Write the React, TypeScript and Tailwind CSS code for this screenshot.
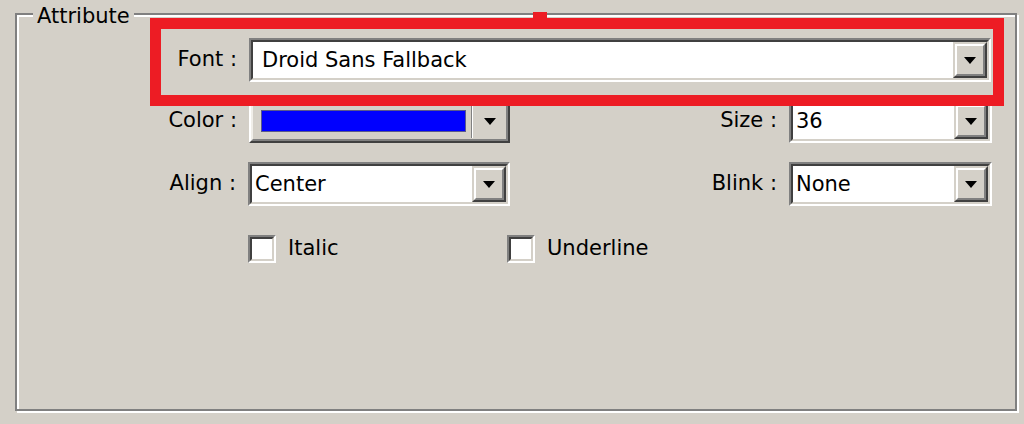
import { ReactNode } from "react";

const FONT = "font-['DejaVu_Sans',Tahoma,sans-serif]";

function DropButton() {
  return (
    <div className="h-full w-[34px] shrink-0 border-2 border-t-[#d4d0c8] border-l-[#d4d0c8] border-b-[#404040] border-r-[#404040]">
      <div className="flex h-full w-full items-center justify-center border-2 border-t-white border-l-white border-b-[#808080] border-r-[#808080] bg-[#d4d0c8]">
        <svg width="12" height="7" viewBox="0 0 12 7">
          <path d="M0 0h12L6 7z" fill="#000" />
        </svg>
      </div>
    </div>
  );
}

function Combo({ value, width, pad = "pl-[3px]" }: { value: string; width: string; pad?: string }) {
  return (
    <div className={`${width} h-[44px] shrink-0 border-2 border-t-[#808080] border-l-[#808080] border-b-white border-r-white`}>
      <div className="flex h-full w-full border-2 border-t-[#404040] border-l-[#404040] border-b-[#d4d0c8] border-r-[#d4d0c8] bg-white">
        <div className={`flex-1 truncate ${pad} text-[21px] leading-[36px] text-black`}>{value}</div>
        <DropButton />
      </div>
    </div>
  );
}

function ColorPicker() {
  return (
    <div className="h-[44px] w-[261px] shrink-0 border-2 border-t-white border-l-white border-b-[#404040] border-r-[#404040]">
      <div className="flex h-full w-full items-center border-2 border-t-[#f0eee9] border-l-[#f0eee9] border-b-[#808080] border-r-[#808080] bg-[#d4d0c8]">
        <div className="ml-[8px] h-[22px] w-[205px] border border-[#5a5a8a] bg-[#0000ff]" />
        <div className="ml-[5px] h-[34px] w-[2px] border-l border-l-[#808080] border-r border-r-white" />
        <div className="flex flex-1 justify-center">
          <svg width="12" height="7" viewBox="0 0 12 7">
            <path d="M0 0h12L6 7z" fill="#000" />
          </svg>
        </div>
      </div>
    </div>
  );
}

function Label({ children, width }: { children: ReactNode; width: string }) {
  return <div className={`${width} shrink-0 pr-[12px] text-right text-[21px] text-black`}>{children}</div>;
}

function Check({ label, width }: { label: string; width?: string }) {
  return (
    <div className={`flex items-center ${width ?? ""}`}>
      <div className="h-[28px] w-[28px] border-2 border-t-[#808080] border-l-[#808080] border-b-white border-r-white">
        <div className="h-full w-full border-2 border-t-[#404040] border-l-[#404040] border-b-[#d4d0c8] border-r-[#d4d0c8] bg-white" />
      </div>
      <span className="ml-[12px] text-[21px] text-black">{label}</span>
    </div>
  );
}

export default function App() {
  return (
    <div className={`relative h-[424px] w-[1024px] overflow-hidden bg-[#d4d0c8] pl-[15px] pt-[13px] ${FONT}`}>
      <div className="relative h-[398px] w-[1002px] border-2 border-[#808080] shadow-[inset_2px_2px_0_#fff,2px_2px_0_#fff]">
        <div className="absolute left-[16px] top-[-11px] bg-[#d4d0c8] px-[4px] text-[21px] leading-[24px] text-black">
          Attribute
        </div>

        <div className="pt-[23px]">
          <div className="flex items-center">
            <Label width="w-[232px]">Font :</Label>
            <Combo value="Droid Sans Fallback" width="w-[742px]" pad="pl-[9px]" />
          </div>

          <div className="mt-[17px] flex items-center">
            <Label width="w-[232px]">Color :</Label>
            <ColorPicker />
            <Label width="w-[279px]">Size :</Label>
            <Combo value="36" width="w-[203px]" />
          </div>

          <div className="mt-[19px] flex items-center">
            <Label width="w-[231px]">Align :</Label>
            <Combo value="Center" width="w-[262px]" />
            <Label width="w-[279px]">Blink :</Label>
            <Combo value="None" width="w-[203px]" />
          </div>

          <div className="ml-[231px] mt-[27px] flex items-center">
            <Check label="Italic" width="w-[259px]" />
            <Check label="Underline" />
          </div>
        </div>
      </div>

      {/* red highlight drawn over the font row */}
      <div className="pointer-events-none absolute left-[150px] top-[18px] h-[88px] w-[854px] border-[11px] border-[#ed1c24]" />
      <div className="pointer-events-none absolute left-[533px] top-[12px] h-[7px] w-[14px] bg-[#ed1c24]" />
    </div>
  );
}
